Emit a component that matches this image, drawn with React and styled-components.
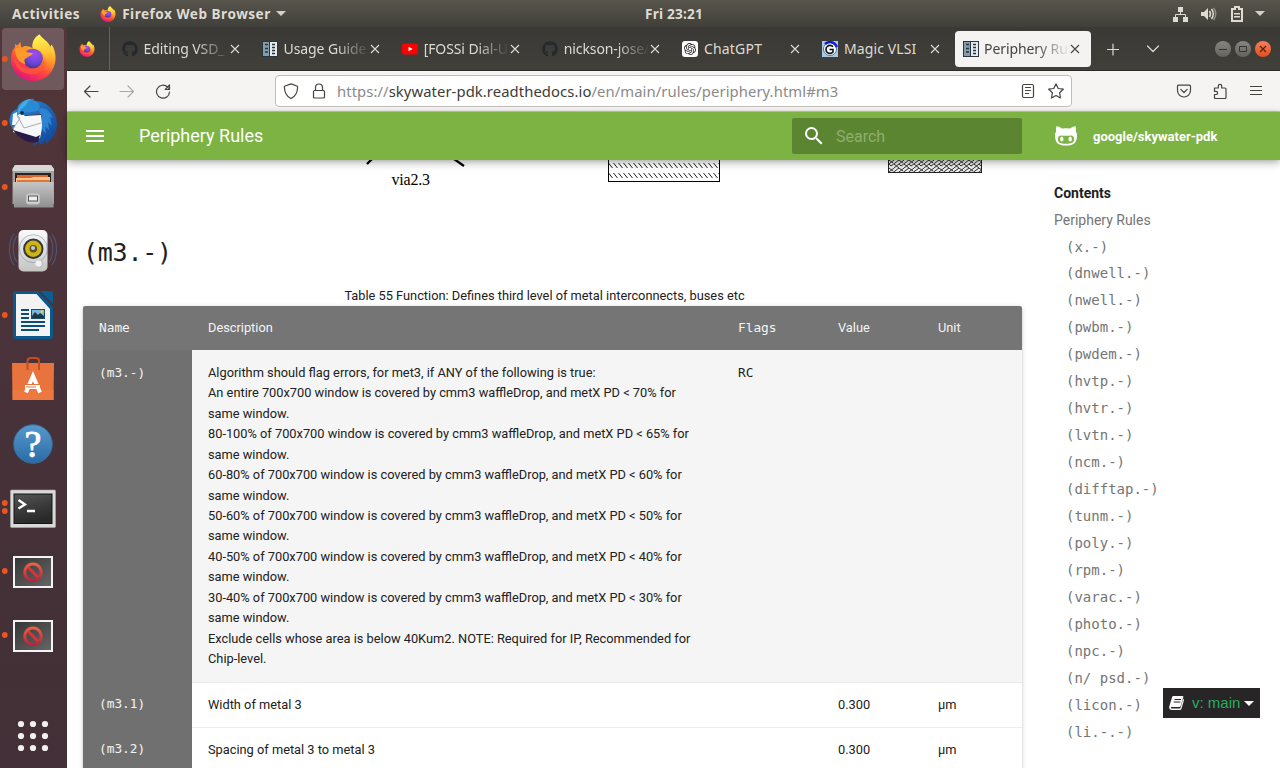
import React from "react";
import styled, { createGlobalStyle, css } from "styled-components";
import { FaGithub } from "react-icons/fa";
import { SiOpenai } from "react-icons/si";
import { MdMenu, MdSearch } from "react-icons/md";

const uiFont = `"Noto Sans", "Open Sans", sans-serif`;
const monoFont = `"DejaVu Sans Mono", monospace`;

const GlobalStyle = createGlobalStyle`
  * { box-sizing: border-box; }
  body { margin: 0; background: #fff; overflow: hidden; }
  svg { display: block; flex: none; }
`;

const Desktop = styled.div`
  width: 1280px;
  height: 768px;
  display: flex;
  flex-direction: column;
  overflow: hidden;
  font-family: Roboto, sans-serif;
`;

/* ---------- system bar ---------- */
const SystemBar = styled.header`
  height: 27px;
  flex: none;
  display: grid;
  grid-template-columns: 633px auto 1fr;
  align-items: center;
  padding: 0 15px 0 12px;
  background: linear-gradient(#58554c, #403f3a);
  color: #dfdbd2;
  font: 700 13.6px/27px ${uiFont};
`;
const SystemGroup = styled.div`
  display: flex;
  align-items: center;
  justify-content: ${(p) => (p.$end ? "flex-end" : "flex-start")};
  height: 27px;
`;
const Label = styled.span`
  letter-spacing: ${(p) => p.$track || 0}px;
  margin-right: ${(p) => p.$after || 0}px;
  white-space: nowrap;
`;
const Caret = styled.i`
  border: 5px solid transparent;
  border-top-color: #d5d1c9;
  border-bottom: 0;
`;
const StatusIcons = styled.svg`
  margin-right: 11px;
`;

/* ---------- dock ---------- */
const Workspace = styled.div`
  flex: 1;
  display: flex;
  min-height: 0;
`;
const Dock = styled.nav`
  width: 67px;
  flex: none;
  display: flex;
  flex-direction: column;
  background: linear-gradient(#523638, #4b333a 35%, #443037 75%, #433038);
`;
const DockSlot = styled.div`
  height: 64px;
  flex: none;
`;
const DockApps = styled.div`
  margin-top: auto;
  height: 64px;
`;

/* ---------- browser chrome ---------- */
const Browser = styled.div`
  flex: 1;
  min-width: 0;
  display: flex;
  flex-direction: column;
`;
const TabStrip = styled.div`
  height: 44px;
  flex: none;
  display: flex;
  align-items: center;
  background: linear-gradient(#3a3935, #403f3a);
  border-bottom: 1px solid #2b2a27;
  font: 400 14px/20px ${uiFont};
  color: #dfdbd2;
`;
const PinnedTab = styled.div`
  width: 43px;
  height: 43px;
  flex: none;
  display: flex;
  align-items: center;
  padding-left: 12px;
  border-right: 1px solid #65645f;
`;
const TabRow = styled.div`
  display: flex;
  margin-left: 2.5px;
`;
const Tab = styled.div`
  width: 136.100px;
  height: 36px;
  margin: 0 2px;
  padding: 0 11px 0 7.500px;
  display: flex;
  align-items: center;
  border-radius: 4px;
  ${(p) =>
    p.$active &&
    css`
      background: #f4f3f2;
      color: #45443f;
    `}
`;
const TabTitle = styled.span`
  flex: 1;
  margin-left: 5.5px;
  overflow: hidden;
  white-space: nowrap;
  letter-spacing: ${(p) => p.$track || 0}px;
  ${(p) => p.$fade && css`mask-image: linear-gradient(90deg, #000 60%, transparent);`}
`;
const StripTools = styled.div`
  display: flex;
  flex: 1;
  align-items: center;
  padding-left: 11.5px;
`;
const WindowButtons = styled.div`
  display: flex;
  gap: 4px;
  margin-left: auto;
  margin-right: 9px;
`;
const WindowButton = styled.span`
  width: 16px;
  height: 16px;
  border-radius: 50%;
  background: ${(p) => (p.$close ? "linear-gradient(#f58058,#e4501f)" : "linear-gradient(#87857e,#65635d)")};
`;
const NavBar = styled.div`
  height: 41px;
  flex: none;
  display: flex;
  align-items: center;
  background: #f5f4f2;
  border-bottom: 1px solid #c9c8c7;
  color: #45443f;
`;
const NavButtons = styled.div`
  width: 208px;
  display: flex;
  gap: 20px;
  padding-left: 16px;
`;
const AddressBar = styled.div`
  width: 797px;
  height: 32px;
  display: flex;
  align-items: center;
  padding: 0 7px;
  background: #fff;
  border: 1px solid #bfbdbb;
  border-radius: 4px;
`;
const Address = styled.span`
  flex: 1;
  margin-left: 10px;
  font: 400 14.8px/22px ${uiFont};
  letter-spacing: 0.085px;
  color: #8b8a88;
  b { font-weight: 400; color: #3d3c39; }
`;
const NavTools = styled.div`
  display: flex;
  gap: 20px;
  margin-left: 104px;
`;
const Gap = styled.span`
  width: ${(p) => p.$w}px;
  flex: none;
`;

/* ---------- web page ---------- */
const SiteHeader = styled.div`
  height: 48px;
  flex: none;
  display: flex;
  align-items: center;
  padding-left: 16px;
  background: #7cb342;
  color: #fff;
  box-shadow: 0 0 4px rgba(0, 0, 0, 0.14), 0 3px 8px rgba(0, 0, 0, 0.28);
  position: relative;
  z-index: 1;
`;
const SiteTitle = styled.h1`
  width: 653px;
  margin: 0 0 0 32px;
  font: 400 18px/24px Roboto, sans-serif;
`;
const SearchBox = styled.div`
  width: 230px;
  height: 36px;
  display: flex;
  align-items: center;
  padding-left: 10px;
  border-radius: 2px;
  background: #5c8531;
  color: #fff;
`;
const Placeholder = styled.span`
  margin-left: 10px;
  font-size: 16px;
  color: #90ae70;
`;
const Repository = styled.div`
  display: flex;
  align-items: center;
  margin-left: 33px;
  gap: 16px;
  font-size: 13px;
  font-weight: 700;
`;
const Page = styled.div`
  flex: 1;
  display: flex;
  min-height: 0;
  overflow: hidden;
  background: #fff;
`;
const Article = styled.main`
  width: 939px;
  flex: none;
  margin-left: 16px;
  color: #212121;
`;
const Heading = styled.h2`
  margin: 40px 0 0;
  font: 400 25px/35px ${monoFont};
  letter-spacing: -0.25px;
`;
const Caption = styled.div`
  margin-top: 16px;
  padding-right: 16px;
  text-align: center;
  font-size: 12.8px;
  line-height: 20px;
`;
const Table = styled.div`
  border-radius: 2px;
  overflow: hidden;
  font-size: 12.8px;
  line-height: 20.48px;
  box-shadow: 0 2px 2px rgba(0, 0, 0, 0.14), 0 1px 5px rgba(0, 0, 0, 0.16);
`;
const Row = styled.div`
  display: grid;
  grid-template-columns: 109px 530px 100px 100px 100px;
  background: ${(p) => (p.$head ? "#757575" : p.$striped ? "#f5f5f5" : "#fff")};
  color: ${(p) => (p.$head ? "#f4f4f4" : "#212121")};
  height: ${(p) => p.$h || 45}px;
  padding-top: ${(p) => (p.$striped ? 0.6 : 0)}px;
  border-bottom: ${(p) => (p.$head ? 0 : "1px solid #ebebeb")};
`;
const Cell = styled.div`
  padding: 12px 0 0 16px;
  ${(p) => p.$mono && css`font-family: ${monoFont};`}
  ${(p) => p.$name && css`
    background: #707070;
    color: #f4f4f4;
    margin: -0.6px 0 -1px;
    padding-top: ${p.$first ? 12.6 : 11.8}px;
  `}
`;
const Line = styled.div`
  white-space: nowrap;
`;
const Contents = styled.aside`
  margin: 19.6px 0 0 32px;
  font-size: 14px;
  line-height: 26.95px;
  color: #757575;
`;
const ContentsTitle = styled.div`
  font-weight: 700;
  color: #212121;
`;
const ContentsItem = styled.div`
  padding-left: 12px;
  font-family: ${monoFont};
  white-space: pre;
`;
const VersionBadge = styled.div`
  position: absolute;
  left: 1163px;
  top: 688px;
  width: 97px;
  height: 30px;
  display: flex;
  align-items: center;
  padding-left: 6px;
  z-index: 2;
  background: #272525;
  color: #27ae60;
  font: 15px/30px "Liberation Sans", sans-serif;
  ${Caret} { border-top-color: #fcfcfc; margin-left: 4px; }
`;
const VersionText = styled.span`
  margin-left: 8px;
  white-space: nowrap;
`;

const FirefoxDrawing = () => (
  <g>
    <defs>
      <linearGradient id="fxBody" x1=".8" y1=".05" x2=".3" y2="1">
        <stop offset="0" stopColor="#fff44f" />
        <stop offset=".35" stopColor="#ffa52a" />
        <stop offset=".65" stopColor="#ff4b3a" />
        <stop offset="1" stopColor="#e0127f" />
      </linearGradient>
      <linearGradient id="fxFlame" x1=".5" y1="0" x2=".7" y2="1">
        <stop offset="0" stopColor="#fff44f" />
        <stop offset=".6" stopColor="#ffc435" />
        <stop offset="1" stopColor="#ff8a20" stopOpacity=".2" />
      </linearGradient>
      <radialGradient id="fxGlobe" cx=".6" cy=".25" r=".8">
        <stop offset="0" stopColor="#a24bf2" />
        <stop offset=".6" stopColor="#6d47d8" />
        <stop offset="1" stopColor="#44338e" />
      </radialGradient>
    </defs>
    <path fill="url(#fxBody)" d="M39.500 7.500C42 12 48 14 50.500 20L51.500 17.500C55 22 56.500 30 55 36C52.500 47 44 54 33 54C20.500 54 11 44.500 11 32C11 26 13 22 15 20L15 17L17.500 18.500L20.500 15C20.500 18 21 19.500 22 20.500C25 18 28 19 32.500 21C32 14 35 10 39.500 7.500Z" />
    <path fill="url(#fxFlame)" d="M39.500 7.500C42 12 48 14 50.500 20C53 26 52 35 48 40C47 33 45 28 40 24C36 22 33 22 32.500 20C32.500 14 35 10 39.500 7.500Z" />
    <path fill="#ff5a35" opacity=".7" d="M14 29C17 37 24 43 32 42C38 42 43 38 44 32C47 42 38 49 29 47C20 46 14 39 14 29Z" />
    <circle cx="33" cy="31.500" r="9.800" fill="url(#fxGlobe)" />
    <path fill="#ff9a2b" d="M15 22C20 19 26 22 26.500 25L33 26.300C32 29 28 29 27 31C24 31 24 34 25.500 37C19 36 15 30 15 22Z" />
  </g>
);
const FirefoxIcon = () => (
  <svg width="16" height="16" viewBox="10 7 46.500 47.500"><FirefoxDrawing /></svg>
);

const ThunderbirdDrawing = () => (
  <g>
    <defs><linearGradient id="tb" x1="0" y1="0" x2="1" y2="1"><stop stopColor="#2b8fd6" /><stop offset="1" stopColor="#123f96" /></linearGradient></defs>
    <path fill="url(#tb)" d="M18 18C20 10 28 7 34 8L34 10C47 9 57 21 57 33C57 41 52 49 46 53L45 49L41 54L39 51L33 55C38 48 42 45 42 40L42 23L13 25L15 40C11 37 8 31 10 26C11 22 13 19 18 18Z" />
    <path fill="#f6f7f8" d="M13 23L19 20L25 25L41 24C42 32 43 36 40 47L35 49L13 41L15 34L12 34Z" />
    <path fill="#291c48" d="M13 39L36 46L40 44L38 51C29 53 20 49 13 39Z" />
    <path fill="#2a8ad4" d="M17 22C16 12 25 8 32 9C40 10 42 17 37 20C30 22 22 20 17 25Z" />
    <path fill="#3cb0e5" d="M18 20C20 10 29 8 31 8C26 11 28 14 21 18L18 24Z" />
    <path fill="#2d83cf" d="M38 19C44 14 50 20 53 27L50 26L52 35L48 31L49 39L45 35L46 43L42 38L42 25Z" />
    <circle cx="22" cy="22" r="2" fill="#15304f" />
    <path fill="none" stroke="#a9abb0" strokeWidth="1" d="M17 24L24 37L41 32M17 24L20 27L13 38" />
  </g>
);
const FilesDrawing = () => (
  <g>
    <defs><linearGradient id="cabinet" x2="0" y2="1"><stop stopColor="#c5c5c5" /><stop offset="1" stopColor="#8f8f8f" /></linearGradient></defs>
    <path fill="#a2a2a2" d="M12.500 14L15 10H51L54 14V49H12.500Z" />
    <path fill="#d8d8d8" d="M12.500 14L15 10H51L54 14V16H12.500Z" />
    <rect x="15" y="18" width="36" height="10" fill="#272322" />
    <path fill="#e4642a" d="M17 20H48V28H17Z" /><path fill="#f9c38b" d="M16 23H31L33 22H50V28H16Z" /><path fill="#e27731" d="M17 25H50V28H17Z" />
    <path fill="url(#cabinet)" d="M13 27H53.500V52.500H14Z" />
    <rect x="26.500" y="39" width="13" height="10" rx="2" fill="#d0d0d0" stroke="#c4c4c4" />
    <rect x="28.500" y="41" width="9" height="5" fill="#eee" stroke="#555" />
  </g>
);
const MusicDrawing = () => (
  <g>
    <defs><linearGradient id="speaker" x2="0" y2="1"><stop stopColor="#fafafa" /><stop offset="1" stopColor="#c4c4c2" /></linearGradient></defs>
    <g fill="none" stroke="#5a7fb8" strokeWidth="1.200" opacity=".42">
      <path d="M17 17C12 23 12 37 17 43M14 15C8 23 8 38 14 46M49 17C54 23 54 37 49 43M52 15C58 23 58 38 52 46" />
    </g>
    <rect x="18.500" y="11" width="29" height="41.500" rx="5" fill="url(#speaker)" />
    <circle cx="33.300" cy="29.700" r="14" fill="none" stroke="#7087a6" strokeWidth="1" opacity=".5" />
    <circle cx="33.300" cy="29.700" r="9.200" fill="#cdb315" stroke="#35363a" strokeWidth="2" />
    <circle cx="33.300" cy="29.700" r="3.800" fill="#5b5525" /><circle cx="33" cy="29" r="2" fill="#c5cbd0" />
    <circle cx="39" cy="44.500" r="4" fill="#bcbcbc" /><circle cx="38.500" cy="44.500" r="3.200" fill="#f2f2f2" />
    <circle cx="26" cy="46" r="2" fill="none" stroke="#ccc" />
  </g>
);
const WriterDrawing = () => (
  <g>
    <path fill="#0b588c" d="M16 8H38L53 24V53Q53 56 50 56H16Q13 56 13 53V11Q13 8 16 8Z" />
    <path fill="#f3f3f3" d="M16 11H36.500L50 26V53H16Z" />
    <path fill="#0b5d92" d="M40 8H51Q53 8 53 10V21Z" />
    <path stroke="#0c4c78" strokeWidth="1.800" d="M21 27H29M21 31H29M21 35H29M21 39H45M21 43H45M21 47H39" />
    <rect x="31.500" y="26.500" width="13" height="9" fill="#77b7e0" stroke="#174e74" />
    <path d="M32 35V33L35 29L38 32L40 30L44 33V35Z" fill="#213641" /><circle cx="42" cy="28.500" r="1.500" fill="#e7cf51" />
  </g>
);
const SoftwareDrawing = () => (
  <g>
    <path fill="#e8733c" d="M12 16H54L53.500 53H12.500Z" /><path fill="#f07c43" d="M12.500 43H53.800V53H12.500Z" opacity=".6" />
    <path fill="none" stroke="#c64d1b" strokeWidth="2" d="M27.500 23V14Q27.500 11 31 11H36Q39 11 39 14V23" />
    <path fill="none" stroke="#fff" strokeWidth="4" d="M26 45.500L33 29L40 45.500" />
    <path fill="#fff" d="M25 38H40V42H25Z" /><path stroke="#e8733c" strokeWidth="1" d="M24 37.500H42M26 40H36" />
  </g>
);
const HelpMark = styled.text`
  font: 400 38px "Liberation Serif", serif;
  fill: #fff;
  stroke: #fff;
  stroke-width: 0.8px;
  text-anchor: middle;
`;
const HelpDrawing = () => (
  <g>
    <defs><linearGradient id="help" x2="0" y2="1"><stop stopColor="#5799ce" /><stop offset="1" stopColor="#2b6ba5" /></linearGradient></defs>
    <circle cx="33" cy="33" r="19.300" fill="url(#help)" stroke="#376d9c" />
    <HelpMark x="33" y="46">?</HelpMark>
  </g>
);
const TerminalDrawing = () => (
  <g>
    <defs><linearGradient id="screen" x2=".3" y2="1"><stop stopColor="#555" /><stop offset=".5" stopColor="#3d3d3d" /><stop offset="1" stopColor="#292929" /></linearGradient></defs>
    <rect x="10.500" y="15" width="45" height="37.500" rx="1" fill="#d9d9d7" stroke="#aaa" strokeWidth=".6" />
    <rect x="14" y="19" width="38" height="29.500" fill="url(#screen)" stroke="#151515" />
    <path fill="none" stroke="#fff" strokeWidth="2.300" d="M18.500 25L25 29.500L18.500 33.500M27 36H35" />
  </g>
);
const BlockedDrawing = () => (
  <g>
    <defs>
      <linearGradient id="blank" x2="1" y2="1"><stop stopColor="#363636" /><stop offset="1" stopColor="#666" /></linearGradient>
      <linearGradient id="ban" x2="0" y2="1"><stop stopColor="#ef6548" /><stop offset="1" stopColor="#bd1c38" /></linearGradient>
    </defs>
    <rect x="14" y="18" width="38" height="30" fill="url(#blank)" stroke="#f3f3f3" strokeWidth="2" />
    <path fill="url(#ban)" fillRule="evenodd" d="M33 23.500A9.700 9.700 0 1 1 32.900 23.500ZM33 26.500A6.700 6.700 0 1 0 33.100 26.500Z" />
    <path stroke="#d8343a" strokeWidth="3" d="M28.300 28.500L37.700 38" />
  </g>
);

const dockItems = [
  { draw: FirefoxDrawing, dots: [32], active: true },
  { draw: ThunderbirdDrawing, dots: [32] },
  { draw: FilesDrawing, dots: [32] },
  { draw: MusicDrawing, dots: [] },
  { draw: WriterDrawing, dots: [32] },
  { draw: SoftwareDrawing, dots: [] },
  { draw: HelpDrawing, dots: [] },
  { draw: TerminalDrawing, dots: [28, 36] },
  { draw: BlockedDrawing, dots: [32] },
  { draw: BlockedDrawing, dots: [32] },
];

const DocsIcon = () => (
  <svg width="16" height="16">
    <path fill="#27353f" d="M0 0H16V16H0Z" /><path fill="#879dab" d="M1 1H7V15H1Z" /><path fill="#e4ebef" d="M8 1H15V15H8Z" />
    <path stroke="#27353f" strokeWidth="1.500" d="M3 3.500H6M3 7.500H6M3 11H6M10 3.500H13M10 6.500H13M10 9.500H13M10 12.500H13" />
  </svg>
);
const YoutubeIcon = () => (
  <svg width="16" height="16"><rect y="2.500" width="16" height="11" rx="2.500" fill="#f00" /><path fill="#fff" d="M6.500 5.700L10.600 8L6.500 10.300Z" /></svg>
);
const ChatTile = styled.span`
  width: 16px;
  height: 16px;
  flex: none;
  border-radius: 3px;
  background: #fff;
  color: #222;
  display: grid;
  place-items: center;
`;
const MagicIcon = () => (
  <svg width="16" height="16"><path fill="#a9c8e1" d="M0 0H16V16H0Z" /><circle cx="8" cy="8" r="6.500" fill="#fff" stroke="#417fa3" /><path fill="none" stroke="#0b1ee0" strokeWidth="2.500" d="M3 3Q8-1 13 3L15 6" /><path fill="none" stroke="#111" strokeWidth="1.600" d="M11 5.800A4 4 0 1 0 11 11V8.500H7.500" /></svg>
);
const OctocatIcon = () => (
  <svg width="22" height="20" viewBox="0 0 22 20">
    <path fill="#fff" fillRule="evenodd" d="M1.500.3C3.500.2 5.500 1.500 7 2.600Q11 1.900 15 2.600C16.500 1.500 18.500.2 20.500.3C21.200 2 21.200 3.700 20.800 5.200C22.200 7 22.200 9 21.900 11.500C21.200 17.500 18 19.600 11 19.600C4 19.600.8 17.500.1 11.500C-.2 9-.2 7 1.200 5.200C.8 3.700.8 2 1.500.3ZM6.300 9.500C4 9.500 2.900 11 2.900 13C2.900 16.700 5.800 17.800 11 17.800C16.200 17.800 19.100 16.700 19.100 13C19.100 11 18 9.500 15.700 9.500C14 9.500 12.700 9.800 11 9.800C9.300 9.800 8 9.500 6.300 9.500Z" />
    <ellipse cx="6.800" cy="13" rx="1.700" ry="2.500" fill="#fff" /><ellipse cx="15.200" cy="13" rx="1.700" ry="2.500" fill="#fff" />
  </svg>
);
const CloseMark = () => (
  <svg width="10" height="10"><path stroke="currentColor" strokeWidth="1.100" d="M1 1L9 9M9 1L1 9" /></svg>
);

const tabs = [
  { icon: <FaGithub size={16} color="#24292e" />, title: "Editing VSD_", fade: true },
  { icon: <DocsIcon />, title: "Usage Guide", fade: true },
  { icon: <YoutubeIcon />, title: "[FOSSi Dial-U", fade: true },
  { icon: <FaGithub size={16} color="#24292e" />, title: "nickson-jose/", fade: true },
  { icon: <ChatTile><SiOpenai size={12} /></ChatTile>, title: "ChatGPT", track: 0.2 },
  { icon: <MagicIcon />, title: "Magic VLSI", track: 0.1 },
  { icon: <DocsIcon />, title: "Periphery Rul", fade: true, active: true },
];

const LineIcon = ({ d, dim }) => (
  <svg width="16" height="16" viewBox="0 0 16 16" fill="none" stroke="currentColor" strokeWidth="1.200" strokeLinecap="round" strokeLinejoin="round" opacity={dim ? 0.42 : 1}>
    <path d={d} />
  </svg>
);

const rule = [
  "Algorithm should flag errors, for met3, if ANY of the following is true:",
  "An entire 700x700 window is covered by cmm3 waffleDrop, and metX PD < 70% for",
  "same window.",
  "80-100% of 700x700 window is covered by cmm3 waffleDrop, and metX PD < 65% for",
  "same window.",
  "60-80% of 700x700 window is covered by cmm3 waffleDrop, and metX PD < 60% for",
  "same window.",
  "50-60% of 700x700 window is covered by cmm3 waffleDrop, and metX PD < 50% for",
  "same window.",
  "40-50% of 700x700 window is covered by cmm3 waffleDrop, and metX PD < 40% for",
  "same window.",
  "30-40% of 700x700 window is covered by cmm3 waffleDrop, and metX PD < 30% for",
  "same window.",
  "Exclude cells whose area is below 40Kum2. NOTE: Required for IP, Recommended for",
  "Chip-level.",
];
const rows = [
  { name: "(m3.-)", text: rule, flags: "RC", h: 333, striped: true },
  { name: "(m3.1)", text: ["Width of metal 3"], value: "0.300", unit: "µm" },
  { name: "(m3.2)", text: ["Spacing of metal 3 to metal 3"], value: "0.300", unit: "µm" },
];
const sections = ["x.-", "dnwell.-", "nwell.-", "pwbm.-", "pwdem.-", "hvtp.-", "hvtr.-", "lvtn.-", "ncm.-", "difftap.-", "tunm.-", "poly.-", "rpm.-", "varac.-", "photo.-", "npc.-", "n/ psd.-", "licon.-", "li.-.-"];

const FigureLabel = styled.text`
  font: 16px "Liberation Serif", serif;
`;
const LayoutFigure = () => (
  <svg width="939" height="35">
    <defs>
      <pattern id="hatch" x="525" y="3" width="5" height="10" patternUnits="userSpaceOnUse"><path stroke="#222" strokeWidth="1" d="M.5 0L4.500 5" /></pattern>
      <pattern id="weave" x="806" y="0" width="10" height="8" patternUnits="userSpaceOnUse">
        <path fill="#ececec" d="M0 0H10V8H0Z" />
        <path fill="none" stroke="#333" strokeWidth="1" d="M0 4L5 0M2 6L10 0M5 8L10 4M0 0L4 3M5 4L10 8M0 4L2 6" />
      </pattern>
    </defs>
    <path stroke="#000" strokeWidth="2.300" d="M284 4L289-1M371-1L381 6" />
    <FigureLabel x="308.500" y="25" textLength="38.500">via2.3</FigureLabel>
    <rect x="525.500" y="-5" width="111" height="26.500" fill="url(#hatch)" stroke="#000" />
    <rect x="805.500" y="-5" width="93" height="17.500" fill="url(#weave)" stroke="#222" />
  </svg>
);

export default function App() {
  return (
    <Desktop>
      <GlobalStyle />
      <SystemBar>
        <SystemGroup>
          <Label $after={20} $track={0.5}>Activities</Label>
          <FirefoxIcon />
          <Gap $w={6} />
          <Label $after={5} $track={0.5}>Firefox Web Browser</Label>
          <Caret />
        </SystemGroup>
        <Label $track={0.2}>Fri 23:21</Label>
        <SystemGroup $end>
          <StatusIcons width="72" height="18" fill="#dfdbd2">
            <path d="M6 2H11V7H6ZM1 12H6V17H1ZM11 12H16V17H11Z" /><path fill="none" stroke="#dfdbd2" d="M8.500 7V9.500M3.500 12V9.500H13.500V12" />
            <path d="M29 7H32L36 3V15L32 11H29Z" /><path fill="none" stroke="#dfdbd2" strokeWidth="1.500" d="M37.500 6Q39.500 9 37.500 12M39.500 4Q43 9 39.500 14" /><path fill="none" stroke="#918e86" strokeWidth="1.500" d="M41.500 3Q46 9 41.500 15" />
            <path fill="none" stroke="#dfdbd2" strokeWidth="2" d="M60 4H63V2H67V4H70V16H60Z" /><path d="M62 8H68V9.500H62ZM62 11H68V12.500H62Z" />
          </StatusIcons>
          <Caret />
        </SystemGroup>
      </SystemBar>
      <Workspace>
        <Dock>
          {dockItems.map(({ draw: Drawing, dots, active }, i) => (
            <DockSlot key={i}>
              <svg width="67" height="64">
                {active && <rect x="2" y="1" width="62" height="62" rx="4" fill="#70595c" />}
                {dots.map((y) => <circle key={y} cx="4.800" cy={y} r="2.900" fill="#e95420" />)}
                <Drawing />
              </svg>
            </DockSlot>
          ))}
          <DockApps>
            <svg width="67" height="64" fill="#f2f1f0">
              {[20, 32, 44].map((y) => [21, 33, 45].map((x) => <circle key={`${x}-${y}`} cx={x} cy={y} r="3.100" />))}
            </svg>
          </DockApps>
        </Dock>
        <Browser>
          <TabStrip>
            <PinnedTab><FirefoxIcon /></PinnedTab>
            <TabRow>
              {tabs.map((t, i) => (
                <Tab key={i} $active={t.active}>
                  {t.icon}
                  <TabTitle $fade={t.fade} $track={t.track ?? -0.1}>{t.title}</TabTitle>
                  <CloseMark />
                </Tab>
              ))}
            </TabRow>
            <StripTools>
              <LineIcon d="M2.500 8.500H13.500M8 3V14" />
              <Gap $w={24} />
              <LineIcon d="M2.500 5L8 10.500L13.500 5" />
              <WindowButtons>
                <WindowButton><svg width="16" height="16"><path stroke="#353430" d="M4 8.500H12" /></svg></WindowButton>
                <WindowButton><svg width="16" height="16"><path fill="none" stroke="#353430" d="M4.500 5.500H11.500V10.500H4.500Z" /></svg></WindowButton>
                <WindowButton $close><svg width="16" height="16"><path stroke="#5a2110" strokeWidth="1.300" d="M5 5L11 11M11 5L5 11" /></svg></WindowButton>
              </WindowButtons>
            </StripTools>
          </TabStrip>
          <NavBar>
            <NavButtons>
              <LineIcon d="M15 8.500H2M7 3L1.500 8.500L7 14" />
              <LineIcon dim d="M1 8.500H14M9 3L14.500 8.500L9 14" />
              <LineIcon d="M14.500 9A6.500 6.500 0 1 1 12.500 4L14.500 6M14.500 2V6.500H10.200Z" />
            </NavButtons>
            <AddressBar>
              <LineIcon d="M8 .9L14.500 3.300C15 9 12 14 8 15.500C4 14 1 9 1.500 3.300Z" />
              <Gap $w={12} />
              <LineIcon d="M3.500 7.500H12.500Q13.500 7.500 13.500 8.500V14Q13.500 15 12.500 15H3.500Q2.500 15 2.500 14V8.500Q2.500 7.500 3.500 7.500M4.500 7V4.500A3.500 3.500 0 0 1 11.500 4.500V7" />
              <Address>https://<b>skywater-pdk.readthedocs.io</b>/en/main/rules/periphery.html#m3</Address>
              <LineIcon d="M4 1.500H12Q13.500 1.500 13.500 3V13Q13.500 14.500 12 14.500H4Q2.500 14.500 2.500 13V3Q2.500 1.500 4 1.500M5.500 4.500H10.500M5.500 7.500H10.500M5.500 10.500H8.500" />
              <Gap $w={12} />
              <LineIcon d="M8 .8L10.200 5.500L15.300 6.200L11.600 9.800L12.500 15L8 12.500L3.500 15L4.400 9.800L.7 6.200L5.800 5.500Z" />
            </AddressBar>
            <NavTools>
              <LineIcon d="M2.500 2.200H13.500Q14.500 2.200 14.500 3.200V7.500A6.500 6.500 0 0 1 1.500 7.500V3.200Q1.500 2.200 2.500 2.200M4.800 6.300L8 9.500L11.200 6.300" />
              <LineIcon d="M2.500 5H6.300V3A1.700 1.700 0 0 1 9.700 3V5H13Q14 5 14 6V14.500Q14 15.500 13 15.500H3.500Q2.500 15.500 2.500 14.500V11.500H4A1.600 1.600 0 0 0 4 8.300H2.500Z" />
              <LineIcon d="M2.500 3.500H13.500M2.500 7.500H13.500M2.500 11.500H13.500" />
            </NavTools>
          </NavBar>
          <SiteHeader>
            <MdMenu size={24} />
            <SiteTitle>Periphery Rules</SiteTitle>
            <SearchBox><MdSearch size={24} /><Placeholder>Search</Placeholder></SearchBox>
            <Repository><OctocatIcon />google/skywater-pdk</Repository>
          </SiteHeader>
          <Page>
            <Article>
              <LayoutFigure />
              <Heading>(m3.-)</Heading>
              <Caption>Table 55 Function: Defines third level of metal interconnects, buses etc</Caption>
              <Table>
                <Row $head $h={44}>
                  <Cell $mono>Name</Cell><Cell>Description</Cell><Cell $mono>Flags</Cell><Cell>Value</Cell><Cell>Unit</Cell>
                </Row>
                {rows.map((r) => (
                  <Row key={r.name} $h={r.h} $striped={r.striped}>
                    <Cell $mono $name $first={r.striped}>{r.name}</Cell>
                    <Cell>{r.text.map((t, i) => <Line key={i}>{t}</Line>)}</Cell>
                    <Cell $mono>{r.flags}</Cell>
                    <Cell>{r.value}</Cell>
                    <Cell>{r.unit}</Cell>
                  </Row>
                ))}
              </Table>
            </Article>
            <Contents>
              <ContentsTitle>Contents</ContentsTitle>
              <div>Periphery Rules</div>
              {sections.map((s) => <ContentsItem key={s}>({s})</ContentsItem>)}
            </Contents>
          </Page>
        </Browser>
      </Workspace>
      <VersionBadge>
        <svg width="15" height="14"><path fill="#fcfcfc" d="M4.500 0H13.500Q14.700 0 14.300 1.300L11.700 10Q11.300 11 10.200 11H2.200Q1.300 12.300 2.800 12.600H11.300L14.200 3Q15.200 3.300 14.900 4.400L12.400 13Q12 14 11 14H2.500Q-.3 13.500.2 10.700L3 1.300Q3.400 0 4.500 0Z" /><path stroke="#272525" strokeWidth="1" d="M5.500 3.500H12M4.800 6H11.300" /></svg>
        <VersionText>v: main</VersionText>
        <Caret />
      </VersionBadge>
    </Desktop>
  );
}
